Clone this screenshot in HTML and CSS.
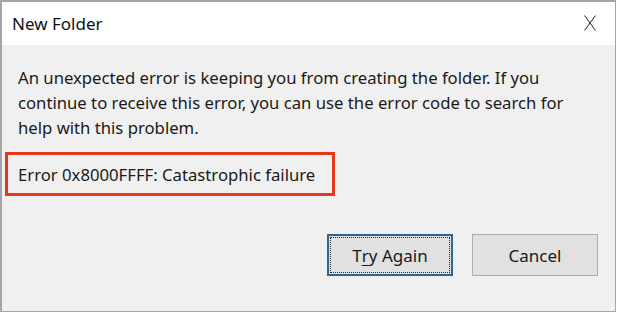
FILE: index.html
```html
<!DOCTYPE html>
<html>
<head>
<meta charset="utf-8">
<link rel="stylesheet" href="styles.css">
</head>
<body>
<div class="window">
  <div class="titlebar">
    <span class="title">New Folder</span>
    <svg class="close" width="12" height="16" viewBox="0 0 12 16"><path d="M0.5 0.5 L11.5 15.5 M11.5 0.5 L0.5 15.5" stroke="#222" stroke-width="1" fill="none"/></svg>
  </div>
  <div class="content">
    <p class="message">An unexpected error is keeping you from creating the folder. If you<br>continue to receive this error, you can use the error code to search for<br>help with this problem.</p>
    <div class="errorbox">Error 0x8000FFFF: Catastrophic failure</div>
    <div class="buttons">
      <button class="btn primary"><span class="focus">T<u>r</u>y Again</span></button>
      <button class="btn">Cancel</button>
    </div>
  </div>
</div>
</body>
</html>
```
FILE: styles.css
```css
html, body {
  margin: 0;
  padding: 0;
  background: #ffffff;
}
.window {
  width: 616px;
  height: 312px;
  box-sizing: border-box;
  border: 2px solid #a6a6a6;
  border-right-width: 1px;
  border-bottom-width: 1px;
  background: #f0f0f0;
  display: flex;
  flex-direction: column;
  font-family: "Noto Sans", "Open Sans", sans-serif;
  color: #1a1a1a;
}
.titlebar {
  height: 43px;
  background: #ffffff;
  display: flex;
  align-items: center;
  justify-content: space-between;
  padding: 0 19px 0 10px;
}
.title {
  font-size: 17px;
  color: #111;
  margin-top: -1px;
}
.close {
  margin-top: -2px;
}
.content {
  flex: 1;
  display: flex;
  flex-direction: column;
  padding: 20px 17px 0 3px;
}
.message {
  margin: 0 0 0 13px;
  font-size: 16.7px;
  line-height: 25px;
  white-space: nowrap;
}
.errorbox {
  align-self: flex-start;
  margin-top: 12px;
  border: 3px solid #e8361e;
  width: 314px;
  height: 38px;
  box-sizing: content-box;
  padding: 0 0 0 10px;
  display: flex;
  align-items: center;
  font-size: 16.7px;
}
.buttons {
  display: flex;
  justify-content: flex-end;
  gap: 19px;
  margin-top: 38px;
}
.btn {
  width: 126px;
  height: 42px;
  box-sizing: border-box;
  background: #e1e1e1;
  border: 1px solid #adadad;
  font-family: "Noto Sans", "Open Sans", sans-serif;
  font-size: 17px;
  color: #1a1a1a;
  padding: 0;
  display: flex;
  align-items: center;
  justify-content: center;
}
.btn.primary {
  border: 2px solid #2f6690;
  padding: 1px;
}
.focus {
  flex: 1;
  align-self: stretch;
  display: flex;
  align-items: center;
  justify-content: center;
  border: 1px dotted #2a2a2a;
}
.focus u {
  text-underline-offset: 3px;
}
```
